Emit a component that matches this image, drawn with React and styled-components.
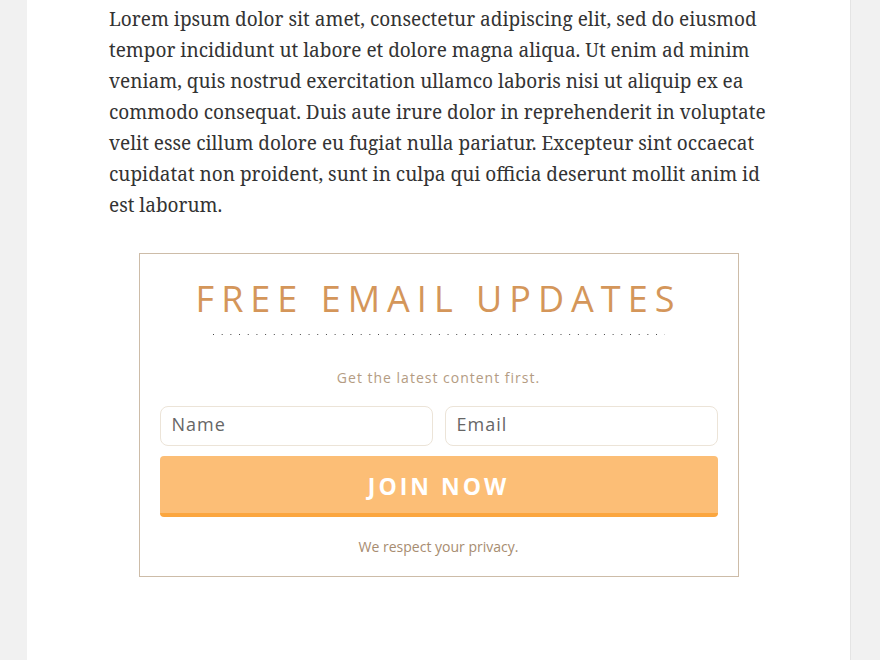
import React from "react";
import styled, { createGlobalStyle } from "styled-components";

const Global = createGlobalStyle`
  html, body { margin: 0; padding: 0; }
  body { background: #f1f1f1; }
`;

const Column = styled.main`
  margin-left: 27px;
  width: 824px;
  min-height: 660px;
  background: #fff;
  border-right: 1px solid #e4e4e4;
  box-sizing: border-box;
  padding: 4px 82px 40px;
`;

const Para = styled.p`
  margin: 0;
  font-family: "Noto Serif", "DejaVu Serif", serif;
  font-size: 19px;
  line-height: 31px;
  color: #333;
`;

const OptinBox = styled.section`
  width: 600px;
  box-sizing: border-box;
  margin: 32px auto 0;
  border: 1px solid #cdbca8;
  padding: 23px 20px 19px;
  font-family: "Open Sans", "Noto Sans", sans-serif;
  text-align: center;
`;

const Title = styled.h2`
  margin: 0;
  height: 44px;
  line-height: 44px;
  font-size: 36px;
  font-weight: 400;
  letter-spacing: 7px;
  color: #d4965a;
  text-transform: uppercase;
`;

const Dots = styled.div`
  width: 452px;
  height: 1px;
  margin: 13px auto 0;
  background-image: linear-gradient(to right, #444 1px, transparent 1px);
  background-size: 8.7px 1px;
  background-repeat: repeat-x;
`;

const Note = styled.p`
  margin: ${(p) => p.$top}px 0 0;
  line-height: 20px;
  font-size: ${(p) => p.$size}px;
  letter-spacing: ${(p) => p.$spacing || 0}px;
  color: ${(p) => p.$color};
`;

const Fields = styled.div`
  display: grid;
  grid-template-columns: 1fr 1fr;
  gap: 12px;
  margin-top: 18px;
`;

const Field = styled.input`
  height: 40px;
  box-sizing: border-box;
  border: 1px solid #ece4d8;
  border-radius: 8px;
  padding: 0 11px 4px;
  font-family: "Open Sans", "Noto Sans", sans-serif;
  font-size: 18px;
  letter-spacing: 1px;
  color: #555;
  outline: none;
  &::placeholder { color: #666; }
`;

const JoinButton = styled.button`
  display: block;
  width: 100%;
  height: 61px;
  margin-top: 10px;
  box-sizing: border-box;
  border: 0;
  border-bottom: 4px solid #fba63f;
  border-radius: 4px;
  background: #fcbe76;
  color: #fff;
  font-family: "Open Sans", "Noto Sans", sans-serif;
  font-weight: 700;
  font-size: 23px;
  letter-spacing: 3px;
  padding: 2px 0 0;
  cursor: pointer;
`;

export default function App() {
  return (
    <>
      <Global />
      <Column>
        <Para>
          Lorem ipsum dolor sit amet, consectetur adipiscing elit, sed do eiusmod tempor incididunt ut labore et dolore magna aliqua. Ut enim ad minim veniam, quis nostrud exercitation ullamco laboris nisi ut aliquip ex ea commodo consequat. Duis aute irure dolor in reprehenderit in voluptate velit esse cillum dolore eu fugiat nulla pariatur. Excepteur sint occaecat cupidatat non proident, sunt in culpa qui officia deserunt mollit anim id est laborum.
        </Para>
        <OptinBox>
          <Title>Free Email Updates</Title>
          <Dots />
          <Note $top={33} $size={14} $spacing={1} $color="#b49c83">Get the latest content first.</Note>
          <Fields>
            <Field placeholder="Name" />
            <Field placeholder="Email" />
          </Fields>
          <JoinButton>JOIN NOW</JoinButton>
          <Note $top={20} $size={14} $color="#a78c70">We respect your privacy.</Note>
        </OptinBox>
      </Column>
    </>
  );
}
